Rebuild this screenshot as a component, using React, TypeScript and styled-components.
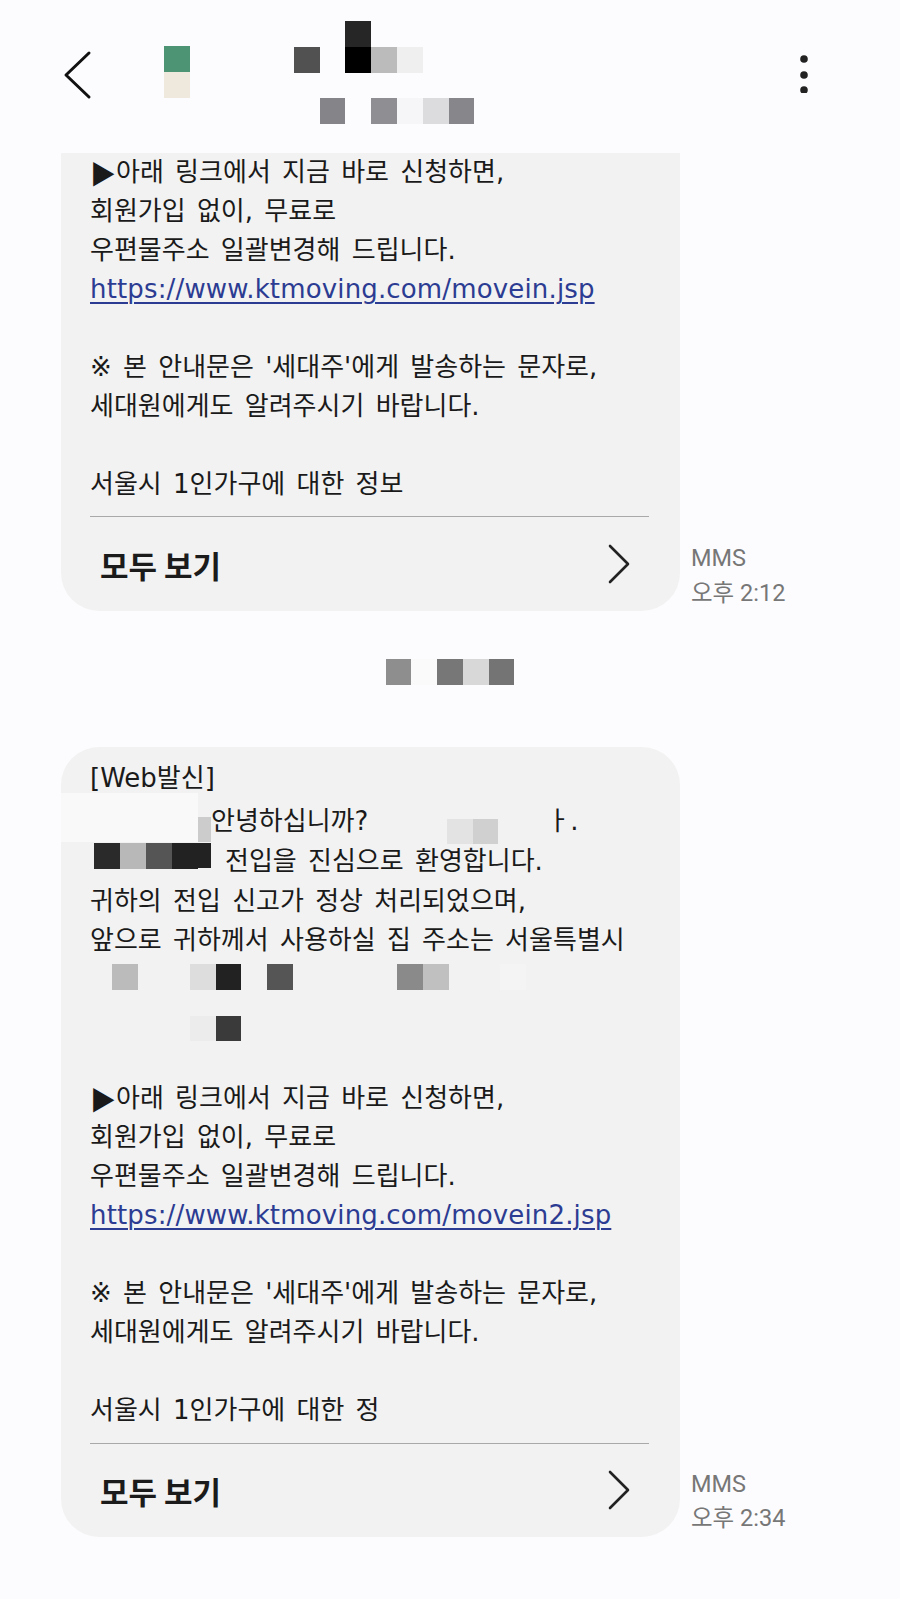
import React from 'react'
import styled, {createGlobalStyle} from 'styled-components'

const GlobalStyle = createGlobalStyle`
  body {
    margin: 0;
    background: #fcfcfe;
  }
`

const Screen = styled.div`
  width: 900px;
  height: 1599px;
  overflow: hidden;
  background: #fcfcfe;
  font-family: 'DejaVu Sans', 'Noto Sans CJK KR', sans-serif;
  color: #1a1a1a;
`

const Header = styled.header`
  display: flex;
  align-items: flex-start;
  height: 153px;
  padding-left: 62px;
  box-sizing: border-box;
`

const BackIcon = styled.svg`
  margin-top: 49px;
  flex-shrink: 0;
`

const KebabIcon = styled.svg`
  margin: 53px 91px 0 auto;
  flex-shrink: 0;
`

const MosaicGrid = styled.div<{$cols: number; $size: number; $ml?: number; $mt?: number}>`
  display: grid;
  grid-template-columns: repeat(${(p) => p.$cols}, ${(p) => p.$size}px);
  grid-auto-rows: ${(p) => p.$size}px;
  flex-shrink: 0;
  margin-left: ${(p) => p.$ml || 0}px;
  margin-top: ${(p) => p.$mt || 0}px;
`

const Tile = styled.span<{$c: string}>`
  background: ${(p) => p.$c || 'transparent'};
`

const Block = styled.span<{$w: number; $h: number; $c: string; $ml?: number; $mt?: number}>`
  display: block;
  flex-shrink: 0;
  width: ${(p) => p.$w}px;
  height: ${(p) => p.$h}px;
  background: ${(p) => p.$c};
  margin-left: ${(p) => p.$ml || 0}px;
  margin-top: ${(p) => p.$mt || 0}px;
`

const Thread = styled.main`
  display: flex;
  flex-direction: column;
`

const MessageRow = styled.div<{$mt?: number}>`
  display: flex;
  align-items: flex-end;
  gap: 11px;
  padding-left: 61px;
  margin-top: ${(p) => p.$mt || 0}px;
`

const Bubble = styled.div<{$clipped?: boolean; $padTop: number}>`
  width: 619px;
  box-sizing: border-box;
  flex-shrink: 0;
  background: #f2f2f2;
  border-radius: ${(p) => (p.$clipped ? '0 0 38px 38px' : '38px')};
  padding: ${(p) => p.$padTop}px 31px 0 29px;
`

const Line = styled.div<{$h?: number}>`
  display: flex;
  align-items: flex-start;
  height: ${(p) => p.$h || 39}px;
  line-height: 39px;
  font-size: 26px;
  word-spacing: 3px;
  white-space: pre;
`

const Span = styled.span<{$ml?: number}>`
  margin-left: ${(p) => p.$ml || 0}px;
`

const Arrow = styled.span`
  font-family: 'Noto Sans CJK KR', sans-serif;
`

const Link = styled.a`
  color: #2c3c92;
  font-size: 26px;
  letter-spacing: 0.15px;
  word-spacing: 0;
  text-decoration: underline;
  text-decoration-thickness: 1.5px;
  text-underline-offset: 4px;
`

const Separator = styled.div<{$mt: number}>`
  height: 1px;
  background: #a9a9a9;
  margin-top: ${(p) => p.$mt}px;
`

const MoreRow = styled.div<{$h: number}>`
  display: flex;
  align-items: center;
  justify-content: space-between;
  height: ${(p) => p.$h}px;
  padding: 0 18px 0 10px;
`

const MoreLabel = styled.span`
  font-family: 'Noto Sans CJK KR', sans-serif;
  font-weight: 700;
  font-size: 31px;
  color: #1b1b1b;
`

const Meta = styled.div`
  font-family: Roboto, 'Noto Sans CJK KR', sans-serif;
  font-size: 23.5px;
  line-height: 34.5px;
  color: #777777;
  margin-bottom: 1px;
  white-space: nowrap;
`

const DateRow = styled.div`
  display: flex;
  justify-content: center;
  margin-top: 48px;
`

const Mosaic = ({
  cells,
  size = 25.8,
  ml,
  mt
}: {
  cells: string[][]
  size?: number
  ml?: number
  mt?: number
}) => (
  <MosaicGrid $cols={cells[0].length} $size={size} $ml={ml} $mt={mt}>
    {cells.flat().map((c, i) => (
      <Tile key={i} $c={c} />
    ))}
  </MosaicGrid>
)

const Chevron = () => (
  <svg width="24" height="42" viewBox="0 0 24 42">
    <polyline
      points="3,3 21,21 3,39"
      fill="none"
      stroke="#222"
      strokeWidth="2.6"
      strokeLinecap="round"
      strokeLinejoin="round"
    />
  </svg>
)

const MoreFooter = ({sepTop, height}: {sepTop: number; height: number}) => (
  <>
    <Separator $mt={sepTop} />
    <MoreRow $h={height}>
      <MoreLabel>모두 보기</MoreLabel>
      <Chevron />
    </MoreRow>
  </>
)

const NoticeLines = ({url, last}: {url: string; last: string}) => (
  <>
    <Line>
      <Arrow>▶</Arrow>아래 링크에서 지금 바로 신청하면,
    </Line>
    <Line>회원가입 없이, 무료로</Line>
    <Line>우편물주소 일괄변경해 드립니다.</Line>
    <Line>
      <Link href={url}>{url}</Link>
    </Line>
    <Line />
    <Line>※ 본 안내문은 '세대주'에게 발송하는 문자로,</Line>
    <Line>세대원에게도 알려주시기 바랍니다.</Line>
    <Line />
    <Line>{last}</Line>
  </>
)

const MessageMeta = ({time}: {time: string}) => (
  <Meta>
    <div>MMS</div>
    <div>{time}</div>
  </Meta>
)

export default function App() {
  return (
    <Screen>
      <GlobalStyle />
      <Header>
        <BackIcon width="32" height="52" viewBox="0 0 32 52">
          <polyline
            points="27,4 4,26 27,48"
            fill="none"
            stroke="#111"
            strokeWidth="3"
            strokeLinecap="round"
            strokeLinejoin="round"
          />
        </BackIcon>
        <Mosaic ml={70} mt={46} cells={[['#4d9475'], ['#efe8dd']]} />
        <Mosaic
          ml={104}
          mt={21}
          cells={[
            ['', '', '#262626', '', '', '', ''],
            ['#515151', '', '#000000', '#bbbbbb', '#efefef', '', ''],
            ['', '', '', '', '', '', ''],
            ['', '#858589', '', '#8f8f93', '#f6f6f8', '#dcdcdf', '#87878b']
          ]}
        />
        <KebabIcon width="10" height="40" viewBox="0 0 10 40">
          <circle cx="5" cy="6" r="3.8" fill="#222" />
          <circle cx="5" cy="22" r="3.8" fill="#222" />
          <circle cx="5" cy="37" r="3.8" fill="#222" />
        </KebabIcon>
      </Header>

      <Thread>
        <MessageRow>
          <Bubble $clipped $padTop={0}>
            <NoticeLines
              url="https://www.ktmoving.com/movein.jsp"
              last="서울시 1인가구에 대한 정보"
            />
            <MoreFooter sepTop={12} height={94} />
          </Bubble>
          <MessageMeta time="오후 2:12" />
        </MessageRow>

        <DateRow>
          <Mosaic cells={[['#8e8e8e', '#fafafa', '#777777', '#d8d8d8', '#747474']]} />
        </DateRow>

        <MessageRow $mt={62}>
          <Bubble $padTop={12}>
            <Line $h={43}>[Web발신]</Line>
            <Line $h={40}>
              <Block $w={137} $h={49} $c="#f9f9f9" $ml={-29} $mt={-9} />
              <Block $w={13} $h={25} $c="#cccccc" $mt={15} />
              <span>안녕하십니까?</span>
              <Mosaic ml={79} mt={17} size={25.5} cells={[['#e3e3e3', '#d0d0d0']]} />
              <Span $ml={48}>ㅏ.</Span>
            </Line>
            <Line $h={40}>
              <Mosaic
                ml={4}
                mt={1}
                size={26}
                cells={[['#2a2a2a', '#b8b8b8', '#555555', '#222222']]}
              />
              <Block $w={13} $h={25} $c="#222222" $mt={1} />
              <Span $ml={14}>전입을 진심으로 환영합니다.</Span>
            </Line>
            <Line>귀하의 전입 신고가 정상 처리되었으며,</Line>
            <Line $h={38}>앞으로 귀하께서 사용하실 집 주소는 서울특별시</Line>
            <Line $h={120}>
              <Mosaic
                ml={22}
                mt={5}
                size={25.9}
                cells={[
                  ['#bbbbbb', '', '', '#dddddd', '#222222', '', '#555555', '', '', '', '', '#8a8a8a', '#c0c0c0', '', '', '#f4f4f4'],
                  ['', '', '', '', '', '', '', '', '', '', '', '', '', '', '', ''],
                  ['', '', '', '#ececec', '#3a3a3a', '', '', '', '', '', '', '', '', '', '', '']
                ]}
              />
            </Line>
            <NoticeLines
              url="https://www.ktmoving.com/movein2.jsp"
              last="서울시 1인가구에 대한 정"
            />
            <MoreFooter sepTop={13} height={93} />
          </Bubble>
          <MessageMeta time="오후 2:34" />
        </MessageRow>
      </Thread>
    </Screen>
  )
}
